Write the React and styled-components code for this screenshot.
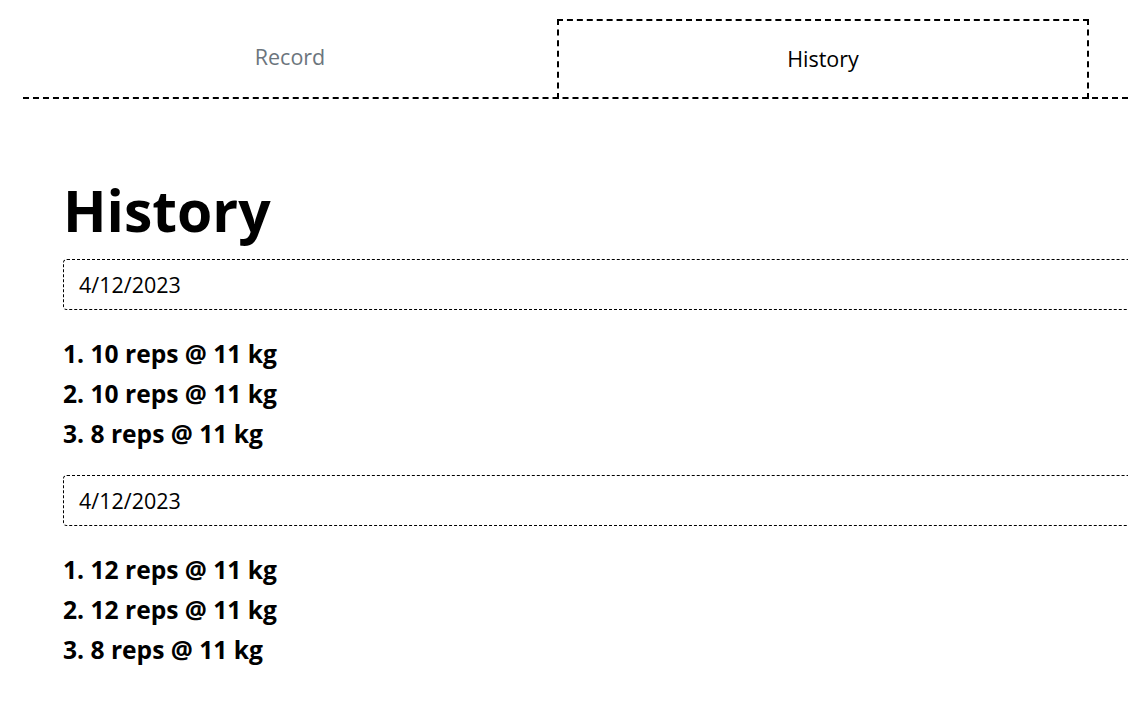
import React from 'react';
import styled, { createGlobalStyle } from 'styled-components';

const GlobalStyle = createGlobalStyle`
  body {
    margin: 0;
    background: #fff;
    overflow: hidden;
    font-family: "Open Sans", "Noto Sans", sans-serif;
    color: #000;
  }
`;

const TabBar = styled.div`
  display: flex;
  margin: 19px 0 0 23px;
  border-bottom: 2px dashed #000;
`;

const Tab = styled.div`
  width: ${(p) => (p.active ? '532px' : '534px')};
  height: 80px;
  box-sizing: border-box;
  display: flex;
  justify-content: center;
  align-items: center;
  font-size: 21.5px;
  color: ${(p) => (p.active ? '#000' : '#6c757d')};
  padding-bottom: ${(p) => (p.active ? '4px' : '8px')};
  border: 2px dashed ${(p) => (p.active ? '#000' : 'transparent')};
  border-bottom: none;
  margin-bottom: -2px;
  cursor: pointer;
`;

const Main = styled.main`
  padding: 0 0 0 63px;
`;

const Heading = styled.h1`
  margin: 76px 0 14px;
  font-size: 57px;
  line-height: 70px;
  font-weight: 700;
`;

const DateBox = styled.div`
  width: 1100px;
  height: 51px;
  box-sizing: border-box;
  border: 1px dashed #000;
  border-radius: 4px;
  padding-left: 15px;
  display: flex;
  align-items: center;
  font-size: 21.5px;
`;

const SetList = styled.ol`
  list-style: none;
  margin: 24px 0 21px;
  padding: 0;
`;

const SetItem = styled.li`
  font-size: 24.6px;
  font-weight: 700;
  line-height: 40px;
`;

const sessions = [
  { date: '4/12/2023', sets: [[10, 11], [10, 11], [8, 11]] },
  { date: '4/12/2023', sets: [[12, 11], [12, 11], [8, 11]] },
];

const App = () => {
  return (
    <>
      <GlobalStyle />
      <TabBar>
        <Tab>Record</Tab>
        <Tab active>History</Tab>
      </TabBar>
      <Main>
        <Heading>History</Heading>
        {sessions.map((s, i) => (
          <div key={i}>
            <DateBox>{s.date}</DateBox>
            <SetList>
              {s.sets.map(([reps, kg], j) => (
                <SetItem key={j}>
                  {j + 1}. {reps} reps @ {kg} kg
                </SetItem>
              ))}
            </SetList>
          </div>
        ))}
      </Main>
    </>
  );
};

export default App;
